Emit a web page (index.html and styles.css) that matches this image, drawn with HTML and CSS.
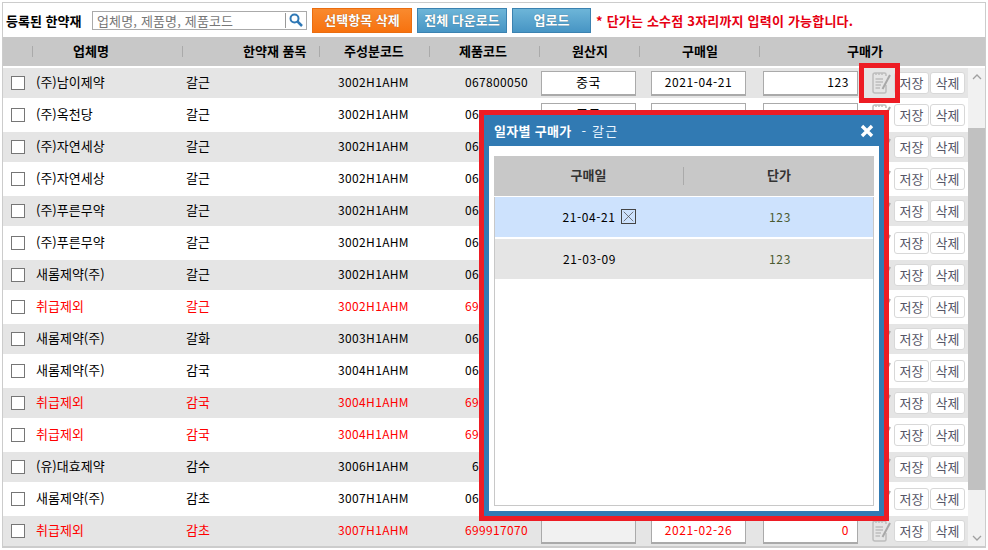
FILE: index.html
```html
<!DOCTYPE html>
<html lang="ko">
<head>
    <meta charset="UTF-8">
    <meta name="viewport" content="width=device-width, initial-scale=1.0">
    <title>등록된 한약재</title>
    <link rel="stylesheet" href="styles.css">
</head>
<body>
    <svg class="defs" width="0" height="0">
        <symbol id="note" viewBox="0 0 19 22">
            <path d="M14 4V2.500Q14 1 12.500 1H3Q1 1 1 3V19Q1 21 3 21H12.500Q14 21 14 19.500V13" fill="none" stroke="#bdbdbd" stroke-width="1.500"/>
            <path d="M4 1V3M7 1V3M10 1V3" stroke="#bdbdbd" stroke-width="1.500"/>
            <path d="M3.500 7H11M3.500 10H11M3.500 13H9M3.500 16H8" stroke="#bdbdbd" stroke-width="1.300"/>
            <path d="M18 3L10.500 17" stroke="#a8a8a8" stroke-width="2"/>
        </symbol>
    </svg>

    <div class="page">
        <!-- 상단 검색 -->
        <div class="toolbar">
            <b class="toolbar-title">등록된 한약재</b>
            <div class="search">
                <input type="text" placeholder="업체명, 제품명, 제품코드">
                <span class="search-btn">
                    <svg width="14" height="14" viewBox="0 0 14 14">
                        <circle cx="5.500" cy="5.500" r="4" fill="none" stroke="#2f78b5" stroke-width="2"/>
                        <path d="M8.500 8.500L13 13" stroke="#2f78b5" stroke-width="2.500"/>
                    </svg>
                </span>
            </div>
            <button class="btn btn-orange">선택항목 삭제</button>
            <button class="btn btn-blue btn-down">전체 다운로드</button>
            <button class="btn btn-blue btn-up">업로드</button>
            <b class="notice">* 단가는 소수점 3자리까지 입력이 가능합니다.</b>
        </div>

        <div class="row head">
            <div></div>
            <div class="th">업체명</div>
            <div class="th">한약재 품목</div>
            <div class="th">주성분코드</div>
            <div class="th">제품코드</div>
            <div class="th">원산지</div>
            <div class="th">구매일</div>
            <div class="th">구매가</div>
        </div>

        <div class="list">
            <div class="list-main">
                <div class="row">
                    <div class="cell-check"><input type="checkbox"></div>
                    <div>(주)남이제약</div><div>갈근</div><div>3002H1AHM</div><div>067800050</div>
                    <div><input class="field center" value="중국"></div>
                    <div><input class="field center" value="2021-04-21"></div>
                    <div class="cell-price"><input class="field price" value="123"><svg class="note"><use href="#note"/></svg><button class="mini">저장</button><button class="mini">삭제</button></div>
                </div>
                <div class="row">
                    <div class="cell-check"><input type="checkbox"></div>
                    <div>(주)옥천당</div><div>갈근</div><div>3002H1AHM</div><div>064300020</div>
                    <div><input class="field center" value="중국"></div>
                    <div><input class="field center" value="2021-03-09"></div>
                    <div class="cell-price"><input class="field price" value="123"><svg class="note"><use href="#note"/></svg><button class="mini">저장</button><button class="mini">삭제</button></div>
                </div>
                <div class="row">
                    <div class="cell-check"><input type="checkbox"></div>
                    <div>(주)자연세상</div><div>갈근</div><div>3002H1AHM</div><div>065100030</div>
                    <div><input class="field center" value="중국"></div>
                    <div><input class="field center" value="2021-03-09"></div>
                    <div class="cell-price"><input class="field price" value="123"><svg class="note"><use href="#note"/></svg><button class="mini">저장</button><button class="mini">삭제</button></div>
                </div>
                <div class="row">
                    <div class="cell-check"><input type="checkbox"></div>
                    <div>(주)자연세상</div><div>갈근</div><div>3002H1AHM</div><div>065100040</div>
                    <div><input class="field center" value="중국"></div>
                    <div><input class="field center" value="2021-03-09"></div>
                    <div class="cell-price"><input class="field price" value="123"><svg class="note"><use href="#note"/></svg><button class="mini">저장</button><button class="mini">삭제</button></div>
                </div>
                <div class="row">
                    <div class="cell-check"><input type="checkbox"></div>
                    <div>(주)푸른무약</div><div>갈근</div><div>3002H1AHM</div><div>066200010</div>
                    <div><input class="field center" value="중국"></div>
                    <div><input class="field center" value="2021-03-09"></div>
                    <div class="cell-price"><input class="field price" value="123"><svg class="note"><use href="#note"/></svg><button class="mini">저장</button><button class="mini">삭제</button></div>
                </div>
                <div class="row">
                    <div class="cell-check"><input type="checkbox"></div>
                    <div>(주)푸른무약</div><div>갈근</div><div>3002H1AHM</div><div>066200020</div>
                    <div><input class="field center" value="중국"></div>
                    <div><input class="field center" value="2021-03-09"></div>
                    <div class="cell-price"><input class="field price" value="123"><svg class="note"><use href="#note"/></svg><button class="mini">저장</button><button class="mini">삭제</button></div>
                </div>
                <div class="row">
                    <div class="cell-check"><input type="checkbox"></div>
                    <div>새롬제약(주)</div><div>갈근</div><div>3002H1AHM</div><div>067100010</div>
                    <div><input class="field center" value="중국"></div>
                    <div><input class="field center" value="2021-03-09"></div>
                    <div class="cell-price"><input class="field price" value="123"><svg class="note"><use href="#note"/></svg><button class="mini">저장</button><button class="mini">삭제</button></div>
                </div>
                <div class="row off">
                    <div class="cell-check"><input type="checkbox"></div>
                    <div>취급제외</div><div>갈근</div><div>3002H1AHM</div><div>699917010</div>
                    <div><input class="field center" value="중국"></div>
                    <div><input class="field center" value="2021-02-26"></div>
                    <div class="cell-price"><input class="field price" value="0"><svg class="note"><use href="#note"/></svg><button class="mini">저장</button><button class="mini">삭제</button></div>
                </div>
                <div class="row">
                    <div class="cell-check"><input type="checkbox"></div>
                    <div>새롬제약(주)</div><div>갈화</div><div>3003H1AHM</div><div>067100020</div>
                    <div><input class="field center" value="중국"></div>
                    <div><input class="field center" value="2021-03-09"></div>
                    <div class="cell-price"><input class="field price" value="123"><svg class="note"><use href="#note"/></svg><button class="mini">저장</button><button class="mini">삭제</button></div>
                </div>
                <div class="row">
                    <div class="cell-check"><input type="checkbox"></div>
                    <div>새롬제약(주)</div><div>감국</div><div>3004H1AHM</div><div>067100030</div>
                    <div><input class="field center" value="중국"></div>
                    <div><input class="field center" value="2021-03-09"></div>
                    <div class="cell-price"><input class="field price" value="123"><svg class="note"><use href="#note"/></svg><button class="mini">저장</button><button class="mini">삭제</button></div>
                </div>
                <div class="row off">
                    <div class="cell-check"><input type="checkbox"></div>
                    <div>취급제외</div><div>감국</div><div>3004H1AHM</div><div>699917030</div>
                    <div><input class="field center" value="중국"></div>
                    <div><input class="field center" value="2021-02-26"></div>
                    <div class="cell-price"><input class="field price" value="0"><svg class="note"><use href="#note"/></svg><button class="mini">저장</button><button class="mini">삭제</button></div>
                </div>
                <div class="row off">
                    <div class="cell-check"><input type="checkbox"></div>
                    <div>취급제외</div><div>감국</div><div>3004H1AHM</div><div>699917040</div>
                    <div><input class="field center" value="중국"></div>
                    <div><input class="field center" value="2021-02-26"></div>
                    <div class="cell-price"><input class="field price" value="0"><svg class="note"><use href="#note"/></svg><button class="mini">저장</button><button class="mini">삭제</button></div>
                </div>
                <div class="row">
                    <div class="cell-check"><input type="checkbox"></div>
                    <div>(유)대효제약</div><div>감수</div><div>3006H1AHM</div><div class="code-short">68100010</div>
                    <div><input class="field center" value="중국"></div>
                    <div><input class="field center" value="2021-03-09"></div>
                    <div class="cell-price"><input class="field price" value="123"><svg class="note"><use href="#note"/></svg><button class="mini">저장</button><button class="mini">삭제</button></div>
                </div>
                <div class="row">
                    <div class="cell-check"><input type="checkbox"></div>
                    <div>새롬제약(주)</div><div>감초</div><div>3007H1AHM</div><div>067100050</div>
                    <div><input class="field center" value="중국"></div>
                    <div><input class="field center" value="2021-03-09"></div>
                    <div class="cell-price"><input class="field price" value="123"><svg class="note"><use href="#note"/></svg><button class="mini">저장</button><button class="mini">삭제</button></div>
                </div>
                <div class="row off">
                    <div class="cell-check"><input type="checkbox"></div>
                    <div>취급제외</div><div>감초</div><div>3007H1AHM</div><div>699917070</div>
                    <div><input class="field center disabled" value=""></div>
                    <div><input class="field center" value="2021-02-26"></div>
                    <div class="cell-price"><input class="field price" value="0"><svg class="note"><use href="#note"/></svg><button class="mini">저장</button><button class="mini">삭제</button></div>
                </div>
            </div>

            <!-- 스크롤바 -->
            <div class="scrollbar">
                <span class="arrow">
                    <svg width="10" height="6" viewBox="0 0 10 6"><path d="M1 5L5 1L9 5" fill="none" stroke="#a0a0a0" stroke-width="1.300"/></svg>
                </span>
                <div class="track"><div class="thumb"></div></div>
                <span class="arrow">
                    <svg width="10" height="6" viewBox="0 0 10 6"><path d="M1 1L5 5L9 1" fill="none" stroke="#a0a0a0" stroke-width="1.300"/></svg>
                </span>
            </div>
        </div>
    </div>

    <!-- 강조 표시 -->
    <div class="mark"></div>

    <!-- 일자별 구매가 팝업 -->
    <div class="modal">
        <div class="modal-box">
            <div class="modal-title">
                <span><b>일자별 구매가</b><span class="modal-sub">- 갈근</span></span>
                <svg class="modal-close" width="14" height="14" viewBox="0 0 14 14">
                    <path d="M2 2L12 12M12 2L2 12" stroke="#fff" stroke-width="3.400"/>
                </svg>
            </div>
            <div class="modal-body">
                <div class="history">
                    <div class="history-head">
                        <div class="history-th">구매일</div>
                        <div class="history-th">단가</div>
                    </div>
                    <div class="history-row selected">
                        <div class="history-date">21-04-21
                            <span class="del-box">
                                <svg width="15" height="15" viewBox="0 0 15 15"><path d="M2 2L13 13M13 2L2 13" stroke="#444" stroke-width="0.800"/></svg>
                            </span>
                        </div>
                        <div class="history-price">123</div>
                    </div>
                    <div class="history-row">
                        <div class="history-date">21-03-09</div>
                        <div class="history-price">123</div>
                    </div>
                </div>
            </div>
        </div>
    </div>
</body>
</html>
```
FILE: styles.css
```css
* {
    box-sizing: border-box;
}

body {
    margin: 0;
    background: #fff;
    font-family: "Noto Sans CJK KR", "Liberation Sans", sans-serif;
    font-size: 12px;
    color: #000;
    overflow: hidden;
}

.defs {
    display: block;
    height: 0;
}

.page {
    margin: 2px 2px 0 2px;
    width: 984px;
    height: 546px;
    border: 1px solid #ccc;
    border-bottom-width: 2px;
}

/* 상단 검색 */
.toolbar {
    display: flex;
    align-items: center;
    height: 34px;
    padding-left: 3px;
}

.toolbar-title {
    width: 86px;
    font-size: 13px;
}

.search {
    display: flex;
    align-items: center;
    width: 215px;
    height: 19px;
    border: 1px solid #aaa;
    margin-right: 5px;
}

.search input {
    flex: 1;
    min-width: 0;
    height: 15px;
    border: 0;
    border-right: 1px solid #999;
    padding: 0 0 0 4px;
    font-family: inherit;
    font-size: 13px;
    letter-spacing: 0.15px;
    outline: none;
}

.search input::placeholder {
    color: #777;
}

.search-btn {
    display: flex;
    width: 20px;
    justify-content: center;
}

.btn {
    height: 25px;
    padding: 0 0 2px;
    margin-right: 5px;
    font-family: inherit;
    font-size: 13px;
    font-weight: bold;
    color: #fff;
    cursor: pointer;
    text-shadow: 0 0 1px rgba(0, 0, 0, 0.4);
}

.btn-orange {
    width: 100px;
    background: linear-gradient(#f98a2e, #f7720f);
    border: 1px solid #ea6d10;
}

.btn-blue {
    background: linear-gradient(#6db5d8, #4795c4);
    border: 1px solid #3b82b0;
}

.btn-down {
    width: 90px;
}

.btn-up {
    width: 79px;
}

.notice {
    font-size: 13px;
    letter-spacing: 0.2px;
    color: #e60012;
}

/* 목록 */
.list {
    display: flex;
}

.list-main {
    width: 966px;
}

.row {
    display: grid;
    grid-template-columns: 29px 150px 137px 110px 110px 100px 120px 1fr;
    align-items: center;
    height: 32px;
    border-bottom: 2px solid #fff;
    background: #fff;
}

.row:nth-child(odd) {
    background: #e5e5e5;
}

.row:last-child {
    height: 30px;
    border-bottom: 0;
}

.row.off {
    color: #f00;
}

.row.head {
    height: 31px;
    background: #c8c8c8;
    font-weight: bold;
    font-size: 13px;
}

.th {
    height: 100%;
    display: flex;
    align-items: center;
    position: relative;
    padding-bottom: 2px;
}

.th::before {
    content: "";
    position: absolute;
    left: 0;
    top: 9px;
    height: 11px;
    border-left: 1px solid #aaa;
}

.th:nth-child(2) {
    padding-left: 41px;
}

.th:nth-child(3) {
    padding-left: 61px;
}

.th:nth-child(4) {
    padding-left: 25px;
}

.th:nth-child(5) {
    padding-left: 30px;
}

.th:nth-child(6) {
    padding-left: 33px;
}

.th:nth-child(7) {
    padding-left: 43px;
}

.th:nth-child(8) {
    padding-left: 88px;
}

.cell-check {
    padding-left: 8px;
    display: flex;
}

.cell-check input {
    appearance: none;
    width: 14px;
    height: 14px;
    margin: 0;
    background: #fff;
    border: 1px solid #767676;
}

.list .row > div:nth-child(n+2):nth-child(-n+5) {
    padding-bottom: 4px;
}

.list .row > div:nth-child(2),
.list .row > div:nth-child(3) {
    padding-left: 4px;
    font-size: 13px;
}

.list .row > div:nth-child(4),
.list .row > div:nth-child(5) {
    letter-spacing: 0.35px;
}

.list .row > div:nth-child(4) {
    padding-left: 19px;
}

.list .row > div:nth-child(5) {
    padding-left: 36px;
}

.list .row > .code-short:nth-child(5) {
    padding-left: 43px;
}

.field {
    display: block;
    width: 95px;
    height: 25px;
    background: #fff;
    border: 1px solid #aaa;
    border-bottom-width: 2px;
    font-family: inherit;
    font-size: 12px;
    letter-spacing: 0.6px;
    color: inherit;
    outline: none;
    padding: 0 8px 2px;
}

.row > div:nth-child(6) .field {
    margin-left: 2px;
    font-size: 13px;
}

.row > div:nth-child(7) .field {
    margin-left: 12px;
}

.center {
    text-align: center;
}

.price {
    text-align: right;
    margin-left: 4px;
}

.disabled {
    background: #f1f1f1;
}

.cell-price {
    display: flex;
    align-items: center;
}

.note {
    width: 19px;
    height: 22px;
    margin: 0 3px 0 14px;
    flex: none;
}

.mini {
    width: 35px;
    height: 22px;
    padding: 0 0 2px;
    margin-right: 1px;
    background: #fff;
    border: 1px solid #d8d8d8;
    border-radius: 3px;
    font-family: inherit;
    font-size: 13px;
    color: #556;
    cursor: pointer;
}

/* 스크롤바 */
.scrollbar {
    display: flex;
    flex-direction: column;
    width: 17px;
    height: 478px;
    background: #f1f1f1;
}

.arrow {
    display: flex;
    align-items: center;
    justify-content: center;
    height: 17px;
    flex: none;
}

.track {
    flex: 1;
    padding: 43px 0 39px;
}

.thumb {
    height: 100%;
    background: #c1c1c1;
}

/* 강조 표시 */
.mark {
    position: absolute;
    left: 859px;
    top: 63px;
    width: 41px;
    height: 40px;
    border: 5px solid #ed1c24;
}

/* 팝업 */
.modal {
    position: absolute;
    left: 479px;
    top: 110px;
    width: 410px;
    height: 411px;
    border: 5px solid #ed1c24;
}

.modal-box {
    display: flex;
    flex-direction: column;
    height: 100%;
    background: #317ab3;
    padding: 0 5px 5px;
}

.modal-title {
    display: flex;
    align-items: center;
    justify-content: space-between;
    height: 31px;
    padding: 0 5px 0 5px;
    font-size: 13px;
    letter-spacing: 0.3px;
    color: #fff;
    flex: none;
}

.modal-sub {
    margin-left: 10px;
    letter-spacing: 1.2px;
    color: #eaf6ff;
}

.modal-body {
    flex: 1;
    background: #fff;
    padding: 10px 5px 5px;
}

.history {
    height: 100%;
    border: 1px solid #c8c8c8;
    border-top: 0;
}

.history-head,
.history-row {
    display: grid;
    grid-template-columns: 1fr 1fr;
    align-items: center;
    text-align: center;
}

.history-head {
    height: 41px;
    margin: 0 -1px;
    border-bottom: 1px solid #fff;
    background: #c8c8c8;
    font-size: 13px;
    font-weight: bold;
    color: #333;
}

.history-th {
    line-height: 16px;
    padding-bottom: 2px;
}

.history-th:first-child {
    border-right: 1px solid #aaa;
}

.history-row {
    height: 42px;
    padding-bottom: 2px;
    border-bottom: 2px solid #fff;
    background: #e5e5e5;
}

.history-row.selected {
    background: #cde2fd;
}

.history-date {
    display: flex;
    align-items: center;
    justify-content: center;
    gap: 5px;
    letter-spacing: 0.6px;
}

.history-price {
    padding-left: 3px;
    letter-spacing: 0.6px;
    color: #4a5a30;
}

.del-box {
    display: flex;
    width: 15px;
    height: 15px;
    border: 1px solid #444;
    margin-right: -19px;
}

.del-box svg {
    width: 13px;
    height: 13px;
}
```
